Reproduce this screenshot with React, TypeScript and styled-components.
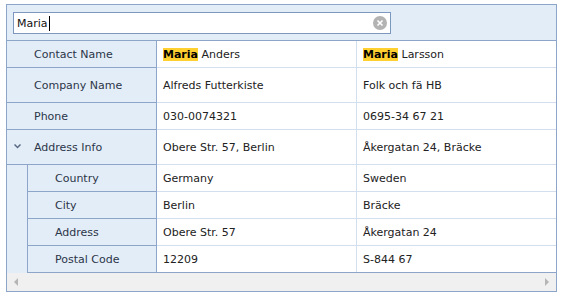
import React from "react";
import styled, { createGlobalStyle } from "styled-components";

const GlobalStyle = createGlobalStyle`
  html, body {
    margin: 0;
    padding: 0;
    background: #ffffff;
  }
  body {
    font-family: "DejaVu Sans", Verdana, sans-serif;
    font-size: 11px;
  }
`;

const Page = styled.div`
  padding: 4px 0 0 6px;
`;

const Grid = styled.div`
  width: 549px;
  border: 1px solid #8ca5c8;
  background: #ffffff;
`;

const Toolbar = styled.div`
  height: 36px;
  box-sizing: border-box;
  padding: 7px 0 0 6px;
  background: #e3edf8;
  border-bottom: 1px solid #8ca5c8;
`;

const SearchBox = styled.div`
  position: relative;
  width: 378px;
  height: 22px;
  box-sizing: border-box;
  border: 1px solid #7d98bf;
  background: #ffffff;
  display: flex;
  align-items: center;
`;

const SearchInput = styled.input`
  border: none;
  outline: none;
  background: transparent;
  font-family: "DejaVu Sans", Verdana, sans-serif;
  font-size: 11px;
  color: #111;
  padding: 0 0 0 3px;
  flex: 1;
  height: 100%;
`;

const Caret = styled.span`
  position: absolute;
  left: 35px;
  top: 3px;
  width: 1px;
  height: 15px;
  background: #000;
`;

const ClearButton = styled.span`
  width: 14px;
  height: 14px;
  margin-right: 3px;
  border-radius: 50%;
  background: #b3b3b3;
  display: flex;
  align-items: center;
  justify-content: center;
`;

const Rows = styled.div`
  display: flex;
  flex-direction: column;
`;

const Row = styled.div<{ $h: number; $nested?: boolean; $last?: boolean }>`
  display: grid;
  grid-template-columns: ${(p) => (p.$nested ? "21px 129px" : "150px")} 200px 1fr;
  height: ${(p) => p.$h}px;
  border-bottom: 1px solid ${(p) => (p.$last ? "#8ca5c8" : "#d3dfee")};
`;

const Indent = styled.div`
  background: #e3edf8;
  border-right: 1px solid #8ca5c8;
  margin-bottom: -1px;
`;

const Label = styled.div`
  background: #e3edf8;
  border-right: 1px solid #8ca5c8;
  box-shadow: 0 1px 0 #8ca5c8;
  display: flex;
  align-items: center;
  padding-left: 27px;
  color: #2b3648;
  position: relative;
`;

const Chevron = styled.span`
  position: absolute;
  left: 7px;
  top: 50%;
  margin-top: -3px;
  display: flex;
`;

const Cell = styled.div`
  display: flex;
  align-items: center;
  padding-left: 6px;
  color: #222;
  border-right: 1px solid #d3dfee;
  white-space: pre;
  &:last-child {
    border-right: none;
  }
`;

const Mark = styled.span`
  background: #ffd030;
  font-weight: bold;
  color: #000;
`;

const Scrollbar = styled.div`
  height: 18px;
  background: #f0f0f0;
  display: flex;
  align-items: center;
  justify-content: space-between;
  padding: 0 7px;
`;

const Arrow = styled.span<{ $dir: "left" | "right" }>`
  width: 0;
  height: 0;
  border-top: 4px solid transparent;
  border-bottom: 4px solid transparent;
  ${(p) =>
    p.$dir === "left"
      ? "border-right: 4px solid #b5b5b5;"
      : "border-left: 4px solid #b5b5b5;"}
`;

const hl = (text: string) => {
  const m = "Maria";
  if (!text.startsWith(m)) return <span>{text}</span>;
  return (
    <span>
      <Mark>{m}</Mark>
      {text.slice(m.length)}
    </span>
  );
};

type RowData = {
  label: string;
  values: [string, string];
  h: number;
  nested?: boolean;
  group?: boolean;
};

const rows: RowData[] = [
  { label: "Contact Name", values: ["Maria Anders", "Maria Larsson"], h: 26 },
  { label: "Company Name", values: ["Alfreds Futterkiste", "Folk och fä HB"], h: 34 },
  { label: "Phone", values: ["030-0074321", "0695-34 67 21"], h: 26 },
  {
    label: "Address Info",
    values: ["Obere Str. 57, Berlin", "Åkergatan 24, Bräcke"],
    h: 34,
    group: true,
  },
  { label: "Country", values: ["Germany", "Sweden"], h: 26, nested: true },
  { label: "City", values: ["Berlin", "Bräcke"], h: 26, nested: true },
  { label: "Address", values: ["Obere Str. 57", "Åkergatan 24"], h: 26, nested: true },
  { label: "Postal Code", values: ["12209", "S-844 67"], h: 26, nested: true },
];

export default function App() {
  return (
    <Page>
      <GlobalStyle />
      <Grid>
        <Toolbar>
          <SearchBox>
            <SearchInput defaultValue="Maria" readOnly />
            <Caret />
            <ClearButton>
              <svg width="8" height="8" viewBox="0 0 8 8">
                <path d="M1.5 1.5 L6.5 6.5 M6.5 1.5 L1.5 6.5" stroke="#fff" strokeWidth="1.6" />
              </svg>
            </ClearButton>
          </SearchBox>
        </Toolbar>
        <Rows>
          {rows.map((r, i) => (
            <Row key={r.label} $h={r.h} $nested={r.nested} $last={i === rows.length - 1}>
              {r.nested && <Indent />}
              <Label>
                {r.group && (
                  <Chevron>
                    <svg width="7" height="5" viewBox="0 0 7 5">
                      <path d="M0.5 0.5 L3.5 3.5 L6.5 0.5" stroke="#5a6a82" strokeWidth="1.5" fill="none" />
                    </svg>
                  </Chevron>
                )}
                {r.label}
              </Label>
              <Cell>{hl(r.values[0])}</Cell>
              <Cell>{hl(r.values[1])}</Cell>
            </Row>
          ))}
        </Rows>
        <Scrollbar>
          <Arrow $dir="left" />
          <Arrow $dir="right" />
        </Scrollbar>
      </Grid>
    </Page>
  );
}
